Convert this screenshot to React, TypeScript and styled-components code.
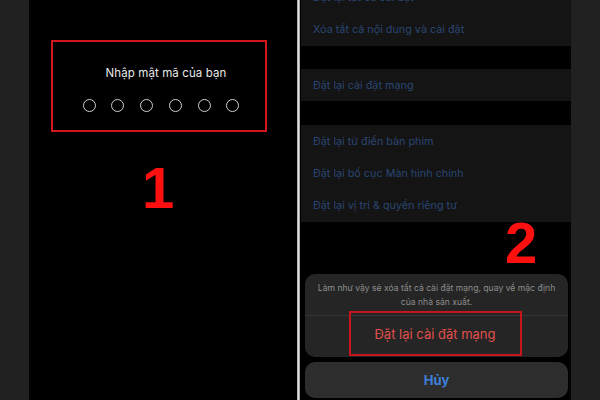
import React from "react";
import styled, { createGlobalStyle } from "styled-components";

const Global = createGlobalStyle`
  html, body { margin: 0; padding: 0; background: #000; }
  body { font-family: Inter, "Noto Sans", "Liberation Sans", sans-serif; }
  * { box-sizing: border-box; }
`;

const Page = styled.div`
  width: 600px;
  height: 400px;
  display: flex;
  overflow: hidden;
  background: #000;
`;

const SideStrip = styled.div`
  width: 29px;
  flex: none;
  background: #212121;
`;

const LeftScreen = styled.div`
  position: relative;
  width: 268px;
  flex: none;
  background: #000;
  padding-top: 40px;
  padding-left: 22px;
`;

const Divider = styled.div`
  width: 3px;
  flex: none;
  background: linear-gradient(90deg, #9a9a9a, #e2e2e2 50%, #8a8a8a);
`;

const HighlightBox = styled.div`
  width: 216px;
  height: 92px;
  border: 2px solid #d1161c;
  display: flex;
  flex-direction: column;
  align-items: center;
  padding-top: 24px;
`;

const Prompt = styled.div`
  color: #e8e8e8;
  font-size: 11.5px;
  letter-spacing: 0.1px;
  line-height: 14px;
  margin-left: 14px;
`;

const Dots = styled.div`
  display: flex;
  gap: 15.7px;
  margin-top: 19px;
  margin-left: 4px;
`;

const Dot = styled.span`
  width: 13px;
  height: 13px;
  border-radius: 50%;
  border: 1.3px solid #cfcfcf;
`;

const StepNumber = styled.div<{ $left: number; $top: number }>`
  position: absolute;
  left: ${(p) => p.$left}px;
  top: ${(p) => p.$top}px;
  color: #ff1010;
  font-family: "Liberation Sans", Arial, sans-serif;
  font-weight: 700;
  font-size: 58px;
  line-height: 1;
`;

const RightScreen = styled.div`
  position: relative;
  width: 271px;
  flex: none;
  background: #000;
  display: flex;
  flex-direction: column;
  overflow: hidden;
  padding-left: 1px;
`;

const List = styled.div`
  margin-top: -19px;
  display: flex;
  flex-direction: column;
`;

const Group = styled.div<{ $gap: number }>`
  background: #141414;
  margin-bottom: ${(p) => p.$gap}px;
`;

const Row = styled.div<{ $h: number }>`
  height: ${(p) => p.$h}px;
  display: flex;
  align-items: center;
  padding-left: 12px;
  color: #2a4672;
  font-size: 10.8px;
`;

const Sheet = styled.div`
  margin-top: auto;
  padding: 0 3px 2px 4px;
  display: flex;
  flex-direction: column;
  gap: 5px;
`;

const SheetCard = styled.div`
  background: #252525;
  border-radius: 10px;
  display: flex;
  flex-direction: column;
`;

const Message = styled.div`
  height: 42px;
  display: flex;
  flex-direction: column;
  align-items: center;
  justify-content: center;
  text-align: center;
  color: #8e8e8e;
  font-size: 8.6px;
  line-height: 14px;
  white-space: nowrap;
  border-bottom: 1px solid #363636;
`;

const ActionArea = styled.div`
  height: 41px;
  display: flex;
  justify-content: center;
  align-items: flex-start;
  padding-right: 3px;
`;

const ActionBox = styled.div`
  width: 173px;
  height: 45px;
  margin-top: -5px;
  border: 2px solid #c7151b;
  display: flex;
  align-items: center;
  justify-content: center;
  color: #e0504b;
  font-size: 13px;
`;

const CancelCard = styled.div`
  background: #2d2d2d;
  border-radius: 10px;
  height: 36px;
  display: flex;
  align-items: center;
  justify-content: center;
  color: #3f80da;
  font-weight: 700;
  font-size: 13px;
`;

export default function App() {
  return (
    <Page>
      <Global />
      <SideStrip />
      <LeftScreen>
        <HighlightBox>
          <Prompt>Nhập mật mã của bạn</Prompt>
          <Dots>
            {Array.from({ length: 6 }).map((_, i) => (
              <Dot key={i} />
            ))}
          </Dots>
        </HighlightBox>
        <StepNumber $left={113} $top={159}>1</StepNumber>
      </LeftScreen>
      <Divider />
      <RightScreen>
        <List>
          <Group $gap={23}>
            <Row $h={32}>Đặt lại tất cả cài đặt</Row>
            <Row $h={33}>Xóa tất cả nội dung và cài đặt</Row>
          </Group>
          <Group $gap={24}>
            <Row $h={32}>Đặt lại cài đặt mạng</Row>
          </Group>
          <Group $gap={0}>
            <Row $h={32}>Đặt lại từ điển bàn phím</Row>
            <Row $h={32}>Đặt lại bố cục Màn hình chính</Row>
            <Row $h={33}>Đặt lại vị trí &amp; quyền riêng tư</Row>
          </Group>
        </List>
        <StepNumber $left={205} $top={214}>2</StepNumber>
        <Sheet>
          <SheetCard>
            <Message>
              <span>Làm như vậy sẽ xóa tất cả cài đặt mạng, quay về mặc định</span>
              <span>của nhà sản xuất.</span>
            </Message>
            <ActionArea>
              <ActionBox>Đặt lại cài đặt mạng</ActionBox>
            </ActionArea>
          </SheetCard>
          <CancelCard>Hủy</CancelCard>
        </Sheet>
      </RightScreen>
      <SideStrip />
    </Page>
  );
}
